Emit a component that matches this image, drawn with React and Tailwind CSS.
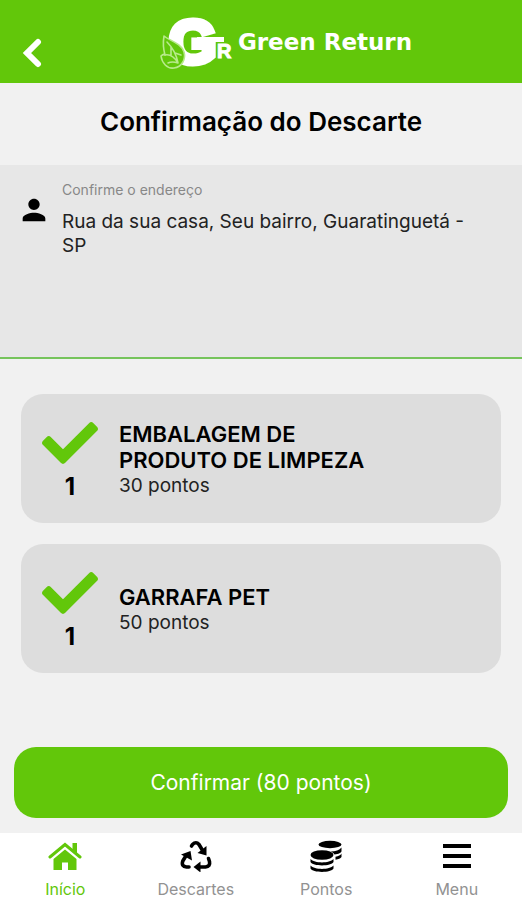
import { FaCheck } from "react-icons/fa";
import { MdPerson } from "react-icons/md";

const items = [
  { id: 1, name: "EMBALAGEM DE PRODUTO DE LIMPEZA", amount: 1, points: 30 },
  { id: 2, name: "GARRAFA PET", amount: 1, points: 50 },
];

const tabs = [
  { label: "Início", icon: HomeIcon, active: true },
  { label: "Descartes", icon: RecycleIcon },
  { label: "Pontos", icon: CoinsIcon },
  { label: "Menu", icon: MenuIcon },
];

function HomeIcon() {
  return (
    <svg width="34" height="32" viewBox="0 0 34 32" fill="currentColor" aria-hidden="true">
      <path d="M17 9.500 28.500 19v11h-8.500v-7.500h-6V30H5.500V19z" />
      <path d="M24.500 3h4.500v11l-4.500-4z" />
      <path d="M2 17 17 4.500 32 17" fill="none" stroke="currentColor" strokeWidth="3" strokeLinecap="round" />
    </svg>
  );
}

function RecycleIcon() {
  return (
    <svg width="32" height="32" viewBox="0 0 32 32" aria-hidden="true">
      <g fill="none" stroke="#000" strokeWidth="3.6" strokeLinecap="round" strokeLinejoin="round">
        <path d="M11.500 6 12.500 4.500Q16 1 19 4.500L22 9.500" />
        <path d="M28.500 18.500 29.500 21.500Q30.500 26.500 25.500 27H18" />
        <path d="M9 27H6.500Q1 26.500 2.800 21L5.500 16.500" />
      </g>
      <path d="M26.500 6v9.500L17.500 13z" />
      <path d="M20.500 21.500v11L13.500 27z" />
      <path d="M1 14.500 10.500 11l1.500 9.500z" />
    </svg>
  );
}

function CoinsIcon() {
  return (
    <svg width="32" height="32" viewBox="0 0 32 32" aria-hidden="true">
      <ellipse cx="20" cy="4.500" rx="11.500" ry="3.700" />
      <path d="M31.500 7.500v3.500c0 2-3 3-7 3.600-1-1.400-2-2.200-4-3 5 0 9-1.300 11-4.100zM31.500 13.500v3.500c-1 1.500-3 2.300-6 2.700v-3c3-.5 5-1.300 6-3.200z" />
      <ellipse cx="12" cy="15" rx="11.500" ry="4.800" />
      <path d="M.5 19c4 4.500 19 4.500 23 0v3c-2 4.500-21 4.500-23 0zM.5 25.500c4 4.500 19 4.500 23 0v3c-2 4.500-21 4.500-23 0z" />
    </svg>
  );
}

function MenuIcon() {
  return (
    <svg width="28" height="32" viewBox="0 0 28 32" aria-hidden="true">
      <path d="M0 4h28v4H0zM0 14h28v4H0zM0 24h28v4H0z" />
    </svg>
  );
}

function Logo() {
  return (
    <svg width="76" height="83" viewBox="0 0 76 83" aria-hidden="true">
      <g fill="#fff" stroke="#fff" fontFamily="'Liberation Sans', sans-serif" fontWeight="700">
        <text x="9" y="63" fontSize="61" strokeWidth="6">G</text>
        <path d="M38 38h25v3H38z" strokeWidth="2" />
        <text x="57" y="58" fontSize="20" strokeWidth="1">R</text>
      </g>
      {/* leaf */}
      <g fill="#62c70a" stroke="#b8ea8c" strokeWidth="1.6" strokeLinejoin="round" strokeLinecap="round">
        <path d="M4 36c6 5 17 7 20 16 2 7-2 15-10 16C7 69 2 63 1 56c1-1 3-2 4-1C3 48 3 42 4 36z" />
        <path d="M7 42c5 5 9 10 11 21M5 55c5-1 10 3 13 8M11 47v8M15 53l6 2M8 63c4-2 7-1 10 0" fill="none" />
      </g>
    </svg>
  );
}

function Header() {
  return (
    <header className="relative flex h-[83px] items-center justify-center bg-[#62c70a] pl-[50px]">
      <button aria-label="Voltar" className="absolute left-5 top-9 p-0.5">
        <svg width="20" height="30" viewBox="0 0 20 30" fill="none" stroke="#fff" strokeWidth="6" strokeLinecap="round">
          <path d="M16 4 5 15l11 11" />
        </svg>
      </button>
      <div className="flex items-center gap-0.5">
        <Logo />
        <span className="pt-0.5 font-['DejaVu_Sans'] text-[23px] font-bold text-white">Green Return</span>
      </div>
    </header>
  );
}

function Item({ item }) {
  return (
    <li className="flex h-[129px] items-center rounded-[22px] bg-[#dddddd] pl-5">
      <div className="flex w-[58px] flex-col items-center">
        <FaCheck size={56} color="#62c70a" />
        <span className="text-2xl font-bold">{item.amount}</span>
      </div>
      <div className="ml-5 w-[270px] pt-px">
        <h2 className="text-[22px] leading-[26px] font-semibold">{item.name}</h2>
        <p className="text-[19px] leading-[25px] text-[#222222]">{item.points} pontos</p>
      </div>
    </li>
  );
}

export default function App() {
  const total = items.reduce((sum, item) => sum + item.points, 0);

  return (
    <div className="flex min-h-screen flex-col bg-[#f1f1f1] font-[Inter,sans-serif] text-black">
      <Header />
      <main className="flex flex-1 flex-col">
        <h1 className="py-5 pb-6 text-center text-[26px] leading-[38px] font-semibold">Confirmação do Descarte</h1>

        <section className="flex h-[194px] border-b-2 border-[#76c45c] bg-[#e7e7e7] pt-4 pr-8 pl-[17px]">
          <MdPerson size={34} className="mt-3 shrink-0" />
          <div className="ml-[11px]">
            <p className="text-sm leading-[18px] text-[#888888]">Confirme o endereço</p>
            <p className="mt-[11px] text-[19px] leading-6 text-[#222222]">
              Rua da sua casa, Seu bairro, Guaratinguetá - SP
            </p>
          </div>
        </section>

        <ul className="flex flex-col gap-[21px] px-[21px] pt-[35px]">
          {items.map((item) => (
            <Item item={item} key={item.id} />
          ))}
        </ul>

        <div className="mt-auto px-3.5 pb-[15px]">
          <button className="h-[71px] w-full rounded-[22px] bg-[#62c70a] text-[21px] text-white">
            Confirmar ({total} pontos)
          </button>
        </div>
      </main>

      <nav className="grid h-[67px] grid-cols-4 bg-white">
        {tabs.map(({ label, icon: Icon, active }) => (
          <a
            href="#"
            key={label}
            className={`flex flex-col items-center pt-[7px] ${active ? "text-[#62c70a]" : "text-[#929292]"}`}
          >
            <Icon />
            <span className="mt-[5px] text-base leading-6">{label}</span>
          </a>
        ))}
      </nav>
    </div>
  );
}
